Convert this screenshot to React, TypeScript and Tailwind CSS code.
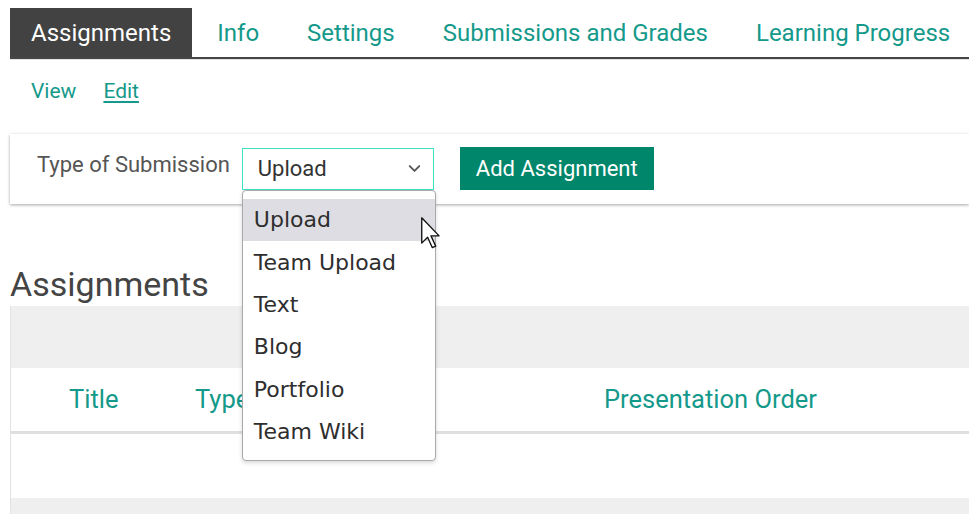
import { ChevronDown } from "lucide-react"

const tabs = ["Assignments", "Info", "Settings", "Submissions and Grades", "Learning Progress"]
const options = ["Upload", "Team Upload", "Text", "Blog", "Portfolio", "Team Wiki"]

function Cursor() {
  return (
    <svg width="22" height="32" viewBox="0 0 12 19" className="absolute left-[177px] top-[26px]">
      <path d="M0.5 0.5 L0.5 15.5 L4 12 L6.8 18.2 L8.8 17.3 L6 11.2 L10.8 11.2 Z" fill="#fff" stroke="#111" strokeWidth="0.8" strokeLinejoin="round" />
    </svg>
  )
}

function SubmissionSelect() {
  return (
    <div className="relative shrink-0">
      <div className="flex h-[42px] w-[192px] items-center justify-between border border-[#3fe2c6] pl-[15px] pr-[9px] text-[22px] text-[#333]">
        <span>Upload</span>
        <ChevronDown className="h-[19px] w-[19px] text-[#555]" strokeWidth={2.4} />
      </div>
      {/* native option list, opened */}
      <div className="absolute left-0 top-[42px] z-10 w-[194px] rounded-[4px] border border-[#a9a9a9] bg-white pb-[7px] pt-[8px] shadow-[0_2px_4px_rgba(0,0,0,0.15)]">
        {options.map((o, i) => (
          <div
            key={o}
            className={`flex h-[42.4px] items-center whitespace-nowrap pl-[11px] font-['DejaVu_Sans',sans-serif] text-[22px] text-[#2e2e2e] ${i === 0 ? "bg-[#dedde3]" : ""}`}
          >
            {o}
          </div>
        ))}
        <Cursor />
      </div>
    </div>
  )
}

export default function App() {
  return (
    <div className="min-h-[514px] overflow-hidden bg-white pl-[10px] font-['Roboto',sans-serif]">
      <nav className="mt-2 flex h-[51px] border-b-2 border-[#454545] shadow-[0_1px_0_#e2e2e2]">
        {tabs.map((t, i) => (
          <div
            key={t}
            className={
              i === 0
                ? "flex h-[49px] shrink-0 items-center whitespace-nowrap bg-[#424242] px-[21px] text-[24px] text-white"
                : `flex h-[49px] shrink-0 items-center whitespace-nowrap px-6 text-[24px] text-[#14998a] ${i === 1 ? "ml-[1px]" : ""}`
            }
          >
            {t}
          </div>
        ))}
      </nav>

      <div className="mt-[17px] flex gap-[27px] pl-[21px] text-[21px] text-[#14998a]">
        <span>View</span>
        <span className="underline underline-offset-[3px]">Edit</span>
      </div>

      <section className="mt-[26px] flex h-[70px] items-center bg-white pl-[27px] shadow-[0_1px_3px_rgba(0,0,0,0.35)]">
        <span className="mb-[8px] mr-[12px] shrink-0 whitespace-nowrap text-[22px] text-[#555]">Type of Submission</span>
        <SubmissionSelect />
        <button className="ml-[26px] h-[43px] shrink-0 whitespace-nowrap bg-[#00866a] px-[16px] text-[22px] text-white">Add Assignment</button>
      </section>

      <h2 className="mt-[60px] text-[34px] leading-[40px] text-[#444]">Assignments</h2>

      <div className="mt-[2px] border-l border-[#e2e2e2]">
        <div className="h-[62px] bg-[#efefef]" />
        <div className="flex h-[66px] items-center border-b-[3px] border-[#dfdfdf] text-[25.5px] text-[#14998a]">
          <span className="ml-[58px] w-[126px] shrink-0">Title</span>
          <span className="w-[409px] shrink-0">Type</span>
          <span className="shrink-0 whitespace-nowrap">Presentation Order</span>
        </div>
        <div className="h-[64px] bg-white" />
        <div className="h-[40px] bg-[#efefef]" />
      </div>
    </div>
  )
}
